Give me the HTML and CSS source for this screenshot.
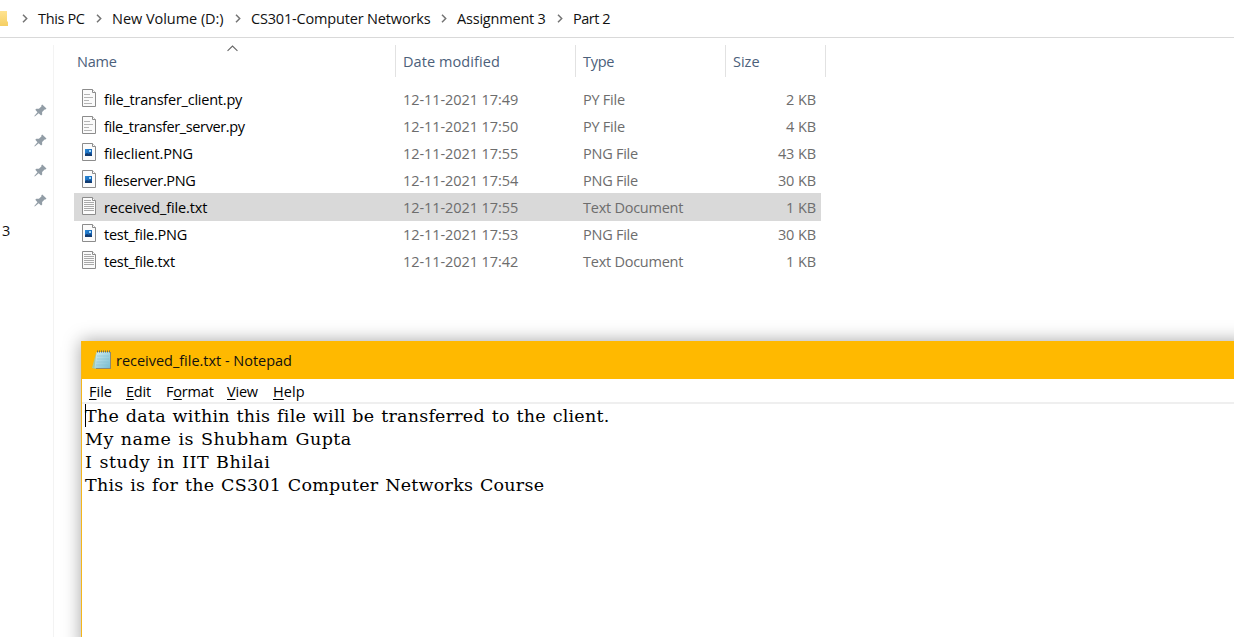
FILE: index.html
```html
<!DOCTYPE html>
<html lang="en">
<head>
<meta charset="utf-8">
<title>Part 2</title>
<link rel="stylesheet" href="styles.css">
</head>
<body>
<svg class="defs" aria-hidden="true">
  <defs>
    <linearGradient id="sky" x1="0" y1="0" x2="1" y2="1"><stop offset="0" stop-color="#2b8ad8"/><stop offset="1" stop-color="#0c4fa0"/></linearGradient>
    <linearGradient id="pad" x1="0" y1="0" x2="1" y2="1"><stop offset="0" stop-color="#d3eef4"/><stop offset="1" stop-color="#79bdd0"/></linearGradient>
    <linearGradient id="folder" x1="0" y1="0" x2="0" y2="1"><stop offset="0" stop-color="#ffe390"/><stop offset="1" stop-color="#f5cf63"/></linearGradient>
    <symbol id="page" viewBox="0 0 14 18"><path d="M.5.5h10l3 3v14H.5z" fill="#fbfbfb" stroke="#8c8c8c"/><path d="M10.5.5v3h3" fill="#fff" stroke="#8c8c8c"/></symbol>
    <symbol id="py" viewBox="0 0 14 18"><use href="#page"/><path d="M2 5.500h6M2 8.500h9M2 11.500h5M2 14.500h8" stroke="#b5b5b5"/></symbol>
    <symbol id="txt" viewBox="0 0 14 18"><use href="#page"/><path d="M2 3.5h7M2 5.5h10M2 7.5h10M2 9.5h10M2 11.5h10M2 13.5h10" stroke="#a9a9a9"/></symbol>
    <symbol id="png" viewBox="0 0 14 18"><use href="#page"/><path d="M3 6h7v7H3z" fill="url(#sky)"/><path d="M3 11l2-1 2 1 1-1 2 2v1H3z" fill="#123b70"/><path d="M7 7h2v2H7z" fill="#a5dcfa"/></symbol>
    <symbol id="pin" viewBox="0 0 13 13"><path d="M8.2.5l4.3 4-1.1 1.1-.8-.1-2.500 2.600.1 2.400-1.100 1L4.700 9.200.8 12.500l-.5-.4 3.200-3.900L1.300 5.700l1-1 2.600.1 2.500-2.400V1.300z" fill="#929da6"/></symbol>
    <symbol id="chev" viewBox="0 0 6 9"><path d="M1 .8l3.7 3.7L1 8.200" fill="none" stroke="#747474" stroke-width="1.5"/></symbol>
  </defs>
</svg>
<main class="explorer">
  <nav class="crumbs">
    <svg class="folder" viewBox="0 0 8 16"><path d="M0 0h7v10l1 1v4H0z" fill="url(#folder)"/></svg>
    <svg class="chev"><use href="#chev"/></svg><span class="crumb pc">This PC</span>
    <svg class="chev"><use href="#chev"/></svg><span class="crumb volume">New Volume (D:)</span>
    <svg class="chev"><use href="#chev"/></svg><span class="crumb course">CS301-Computer Networks</span>
    <svg class="chev"><use href="#chev"/></svg><span class="crumb assignment">Assignment 3</span>
    <svg class="chev"><use href="#chev"/></svg><span class="crumb part">Part 2</span>
  </nav>
  <div class="content">
    <aside class="sidebar">
      <svg class="pin"><use href="#pin"/></svg>
      <svg class="pin"><use href="#pin"/></svg>
      <svg class="pin"><use href="#pin"/></svg>
      <svg class="pin"><use href="#pin"/></svg>
      <span class="side-label">3</span>
    </aside>
    <section class="files">
      <header class="row head">
        <span class="col name">Name<svg class="sort" viewBox="0 0 10 6"><path d="M.5 5.2L5 .8l4.5 4.4" fill="none" stroke="#666"/></svg></span><span class="col date">Date modified</span><span class="col type">Type</span><span class="col size">Size</span>
      </header>
      <div class="list">
        <div class="row"><span class="col name snug"><svg class="icon"><use href="#py"/></svg><span>file_transfer_client.py</span></span><span class="col date">12-11-2021 17:49</span><span class="col type">PY File</span><span class="col size">2 KB</span></div>
        <div class="row"><span class="col name tight"><svg class="icon"><use href="#py"/></svg><span>file_transfer_server.py</span></span><span class="col date">12-11-2021 17:50</span><span class="col type">PY File</span><span class="col size">4 KB</span></div>
        <div class="row"><span class="col name loose"><svg class="icon"><use href="#png"/></svg><span>fileclient.PNG</span></span><span class="col date">12-11-2021 17:55</span><span class="col type">PNG File</span><span class="col size">43 KB</span></div>
        <div class="row"><span class="col name tight"><svg class="icon"><use href="#png"/></svg><span>fileserver.PNG</span></span><span class="col date">12-11-2021 17:54</span><span class="col type">PNG File</span><span class="col size">30 KB</span></div>
        <div class="row selected"><span class="col name loose"><svg class="icon"><use href="#txt"/></svg><span>received_file.txt</span></span><span class="col date">12-11-2021 17:55</span><span class="col type">Text Document</span><span class="col size">1 KB</span></div>
        <div class="row"><span class="col name snug"><svg class="icon"><use href="#png"/></svg><span>test_file.PNG</span></span><span class="col date">12-11-2021 17:53</span><span class="col type">PNG File</span><span class="col size">30 KB</span></div>
        <div class="row"><span class="col name snug"><svg class="icon"><use href="#txt"/></svg><span>test_file.txt</span></span><span class="col date">12-11-2021 17:42</span><span class="col type">Text Document</span><span class="col size">1 KB</span></div>
      </div>
    </section>
  </div>
</main>
<section class="notepad">
  <header class="titlebar">
    <svg class="app" viewBox="0 0 20 20"><path d="M4 3L0 18l4 1z" fill="#a9c9a0"/><path d="M5 2h14v17H4z" fill="#8c8871"/><path d="M4.500 2h13.500v16H2.500z" fill="url(#pad)"/><path d="M5 1.500h13" stroke="#626c64" stroke-width="2" stroke-dasharray="1 1"/><path d="M5 6h12M5 9h12M4.500 12h12M4 15h12" stroke="#81bdcc" stroke-width=".5"/></svg>
    <span class="title">received_file.txt - Notepad</span>
  </header>
  <div class="menu"><span class="m-file"><u>F</u>ile</span><span class="m-edit"><u>E</u>dit</span><span class="m-format">F<u>o</u>rmat</span><span class="m-view"><u>V</u>iew</span><span class="m-help"><u>H</u>elp</span></div>
  <div class="editor">
    <p class="l1">The data within this file will be transferred to the client.</p>
    <p class="l2">My name is Shubham Gupta</p>
    <p class="l3">I study in IIT Bhilai</p>
    <p class="l4">This is for the CS301 Computer Networks Course</p>
    <i class="caret"></i>
  </div>
</section>
</body>
</html>
```
FILE: styles.css
```css
* { box-sizing: border-box; }
body { margin: 0; width: 1234px; height: 637px; overflow: hidden; position: relative; background: #fff; color: #111; font: 14.5px/20px "Open Sans", "Noto Sans", sans-serif; white-space: nowrap; }
svg { display: block; flex: none; }
.defs { position: absolute; width: 0; height: 0; }
.explorer { height: 637px; display: flex; flex-direction: column; }
.crumbs { height: 38px; flex: none; display: flex; align-items: center; border-bottom: 1px solid #d9d9d9; letter-spacing: -.35px; }
.folder { width: 8px; height: 16px; margin-right: 14px; }
.chev { width: 6px; height: 9px; margin-right: 10px; }
.crumb { flex: none; }
.pc { width: 58px; }
.volume { width: 123px; letter-spacing: -.04px; }
.course { width: 190px; letter-spacing: -.17px; }
.assignment { width: 100px; letter-spacing: -.2px; }
.part { letter-spacing: -.5px; }
.content { flex: 1; display: flex; }
.sidebar { width: 54px; margin-top: 7px; border-right: 1px solid #f3f3f3; padding: 59px 6px 0 0; display: flex; flex-direction: column; align-items: flex-end; gap: 17px; }
.pin { width: 13px; height: 13px; }
.side-label { align-self: flex-start; margin: -3px 0 0 2px; }
.files { padding: 7px 0 0 20px; }
.row { width: 747px; height: 27px; display: grid; grid-template-columns: 322px 180px 150px 95px; align-items: center; color: #6d6d6d; }
.col { display: flex; align-items: center; }
.list { padding-top: 9px; }
.list .name { color: #000; padding-left: 8px; }
.snug { letter-spacing: -.23px; }
.tight { letter-spacing: -.37px; }
.loose { letter-spacing: -.13px; }
.icon { width: 14px; height: 18px; margin: -4px 8px 0 0; }
.date, .type { padding-left: 7px; }
.list .date { letter-spacing: -.08px; }
.type { letter-spacing: -.25px; }
.list .size { justify-content: flex-end; padding-right: 5px; letter-spacing: -.1px; }
.selected { background: #d9d9d9; box-shadow: 0 -1px #d9d9d9; }
.head { width: 752px; height: 32px; grid-template-columns: 322px 180px 150px 100px; color: #4c607a; align-items: stretch; }
.head .col { border-right: 1px solid #e2e2e2; padding-top: 2px; }
.head .name { padding-left: 3px; position: relative; letter-spacing: -.2px; }
.head .date { letter-spacing: .08px; }
.head .size { padding-left: 7px; }
.sort { position: absolute; left: 153px; top: 0; width: 11px; height: 7px; }
.notepad { position: absolute; left: 81px; top: 341px; width: 1170px; height: 310px; background: #fff; border-left: 1px solid #f4b61b; box-shadow: 0 0 17px rgba(0,0,0,.36); }
.titlebar { height: 38px; background: #ffb900; display: flex; align-items: center; color: #111; }
.app { width: 20px; height: 20px; margin: 0 4px 0 10px; }
.title { letter-spacing: -.02px; padding-top: 2px; }
.menu { height: 25px; border-bottom: 2px solid #efefef; display: flex; align-items: center; padding: 3px 0 0 7px; color: #000; }
.menu span { flex: none; letter-spacing: -.2px; }
.menu u { text-underline-offset: 2px; text-decoration-thickness: 1px; }
.menu .m-file { width: 37px; letter-spacing: 0; }
.m-edit { width: 40px; }
.m-format { width: 61px; }
.m-view { width: 46px; }
.menu .m-help { letter-spacing: .1px; }
.editor { position: relative; padding: 1px 0 0 3px; color: #000; font: 17.5px/23px "DejaVu Serif", serif; word-spacing: 1px; }
.editor p { margin: 0; }
.l1, .l4 { letter-spacing: .23px; }
.l2, .l3 { letter-spacing: .48px; }
.caret { position: absolute; left: 3px; top: 0; width: 1px; height: 23px; background: #000; }
```
